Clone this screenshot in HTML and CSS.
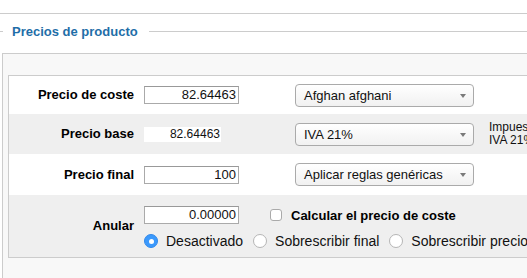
FILE: index.html
```html
<!DOCTYPE html>
<html lang="es">
<head>
<meta charset="utf-8">
<title>Precios de producto</title>
<link rel="stylesheet" href="styles.css">
</head>
<body>
<div class="page">
  <div class="topbar"></div>
  <div class="legend">
    <span class="lline short"></span>
    <span class="ltext">Precios de producto</span>
    <span class="lline grow"></span>
  </div>
  <div class="box">
    <div class="table">
      <div class="row r1">
        <div class="label">Precio de coste</div>
        <div class="input">82.64463</div>
        <div class="select">Afghan afghani<span class="arrow"></span></div>
      </div>
      <div class="row r2 alt">
        <div class="label">Precio base</div>
        <div class="plain">82.64463</div>
        <div class="select sel2">IVA 21%<span class="arrow"></span></div>
        <div class="side">Impuestos incluidos<br>IVA 21%</div>
      </div>
      <div class="row r3">
        <div class="label">Precio final</div>
        <div class="input">100</div>
        <div class="select">Aplicar reglas genéricas<span class="arrow"></span></div>
      </div>
      <div class="row r4 alt">
        <div class="label">Anular</div>
        <div class="stack">
          <div class="line1">
            <div class="input">0.00000</div>
            <span class="check"></span>
            <span class="cblabel">Calcular el precio de coste</span>
          </div>
          <div class="line2">
            <span class="radio on"></span><span class="rlabel">Desactivado</span>
            <span class="radio"></span><span class="rlabel">Sobrescribir final</span>
            <span class="radio"></span><span class="rlabel">Sobrescribir precio base</span>
          </div>
        </div>
      </div>
    </div>
  </div>
</div>
</body>
</html>
```

FILE: styles.css
```css
html, body {
  margin: 0;
  padding: 0;
  background: #fff;
  overflow: hidden;
}
body {
  font-family: "Liberation Sans", Arial, sans-serif;
  color: #111;
}
.page {
  width: 680px;
}
.topbar {
  height: 13px;
  border-bottom: 1px solid #cccccc;
}
.legend {
  display: flex;
  align-items: center;
  height: 35px;
  margin-bottom: 4px;
}
.lline {
  height: 1px;
  background: #cccccc;
}
.lline.short {
  width: 3px;
}
.lline.grow {
  flex: 1;
}
.ltext {
  margin: 0 11px 0 9px;
  font-size: 13px;
  font-weight: bold;
  line-height: 16px;
  color: #1f6ea8;
  white-space: nowrap;
}
.box {
  margin-left: 2px;
  border: 1px solid #cccccc;
  border-bottom: none;
  background: #f8f8f8;
  padding: 21px 0 30px 5px;
}
.table {
  border: 1px solid #cccccc;
  background: #fff;
}
.row {
  display: flex;
  align-items: center;
}
.row.alt {
  background: #efefef;
}
.r1 { height: 38px; }
.r2 { height: 40px; }
.r3 { height: 41px; }
.r4 { height: 62px; }
.label {
  width: 125px;
  margin-right: 10px;
  text-align: right;
  font-size: 13px;
  font-weight: bold;
  line-height: 16px;
  color: #000;
  flex: none;
}
.input {
  width: 95px;
  height: 18px;
  box-sizing: border-box;
  border: 1px solid #aaaaaa;
  border-top-color: #999;
  background: #fff;
  text-align: right;
  font-size: 13px;
  line-height: 16px;
  padding-right: 2px;
  color: #111;
  flex: none;
}
.plain {
  width: 77px;
  height: 15px;
  background: #fff;
  text-align: right;
  font-size: 12px;
  line-height: 15px;
  padding-right: 1px;
  box-sizing: border-box;
  flex: none;
}
.select {
  position: relative;
  margin-left: 56px;
  width: 179px;
  height: 23px;
  box-sizing: border-box;
  border: 1px solid #aaaaaa;
  border-radius: 4px;
  background: linear-gradient(#ffffff, #f1f1f1);
  padding-left: 8px;
  font-size: 13px;
  line-height: 21px;
  color: #111;
  white-space: nowrap;
  flex: none;
}
.select.sel2 {
  margin-left: 74px;
}
.arrow {
  position: absolute;
  right: 7px;
  top: 9px;
  width: 0;
  height: 0;
  border-left: 3.5px solid transparent;
  border-right: 3.5px solid transparent;
  border-top: 4px solid #7a7a7a;
}
.side {
  margin-left: 15px;
  font-size: 12px;
  line-height: 13px;
  white-space: nowrap;
  color: #111;
}
.stack {
  align-self: flex-start;
  padding-top: 11px;
  display: flex;
  flex-direction: column;
  gap: 8px;
}
.line1, .line2 {
  display: flex;
  align-items: center;
  height: 18px;
  white-space: nowrap;
}
.check {
  margin-left: 31px;
  width: 12px;
  height: 12px;
  box-sizing: border-box;
  border: 1px solid #aaaaaa;
  border-radius: 3px;
  background: #fff;
  flex: none;
}
.cblabel {
  margin-left: 9px;
  font-size: 13px;
  font-weight: bold;
  color: #000;
}
.radio {
  width: 14px;
  height: 14px;
  box-sizing: border-box;
  border-radius: 50%;
  border: 1px solid #b5b5b5;
  background: #fff;
  margin-right: 8px;
  display: flex;
  align-items: center;
  justify-content: center;
  flex: none;
}
.radio.on {
  background: #3b99fc;
  border-color: #3289ea;
}
.radio.on::after {
  content: "";
  width: 5px;
  height: 5px;
  border-radius: 50%;
  background: #fff;
}
.rlabel {
  font-size: 14px;
  margin-right: 10px;
  color: #111;
}
```
